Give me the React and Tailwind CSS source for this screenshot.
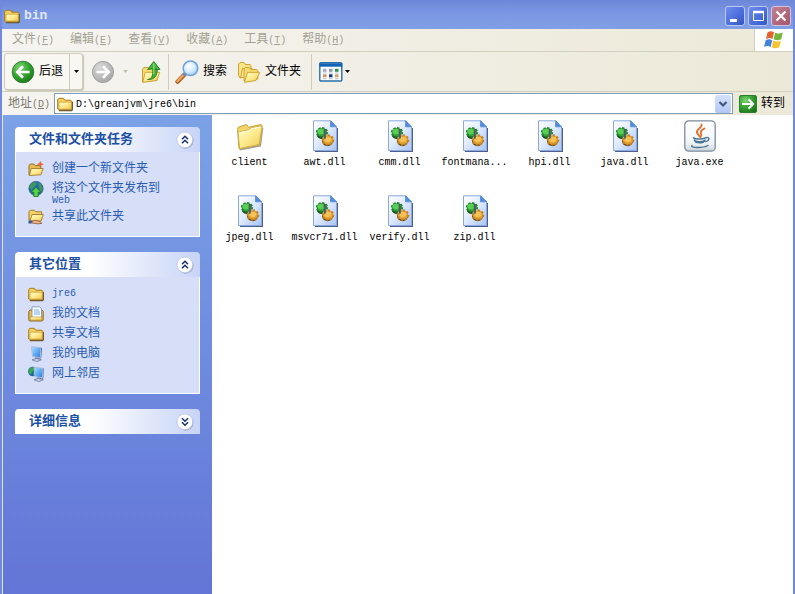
import React, { useState } from 'react';

const menus = [
  { label: '文件', hotkey: 'F' },
  { label: '编辑', hotkey: 'E' },
  { label: '查看', hotkey: 'V' },
  { label: '收藏', hotkey: 'A' },
  { label: '工具', hotkey: 'T' },
  { label: '帮助', hotkey: 'H' },
];

const files = [
  { name: 'client', type: 'folder' },
  { name: 'awt.dll', type: 'dll' },
  { name: 'cmm.dll', type: 'dll' },
  { name: 'fontmana...', type: 'dll' },
  { name: 'hpi.dll', type: 'dll' },
  { name: 'java.dll', type: 'dll' },
  { name: 'java.exe', type: 'java' },
  { name: 'jpeg.dll', type: 'dll' },
  { name: 'msvcr71.dll', type: 'dll' },
  { name: 'verify.dll', type: 'dll' },
  { name: 'zip.dll', type: 'dll' },
];

// Gradients shared by all the icons
function IconDefs() {
  return (
    <svg width="0" height="0" className="absolute" aria-hidden="true">
      <defs>
        <linearGradient id="folderFront" x1="0" y1="0" x2="1" y2="1">
          <stop offset="0" stopColor="#fffbd0" />
          <stop offset="0.5" stopColor="#fdeb8f" />
          <stop offset="1" stopColor="#f0c64c" />
        </linearGradient>
        <linearGradient id="page" x1="0" y1="0" x2="1" y2="1">
          <stop offset="0" stopColor="#ffffff" />
          <stop offset="0.45" stopColor="#e2ecfd" />
          <stop offset="1" stopColor="#a9c4f6" />
        </linearGradient>
        <radialGradient id="greenBall" cx="0.35" cy="0.3" r="0.8">
          <stop offset="0" stopColor="#7ed672" />
          <stop offset="0.5" stopColor="#37a532" />
          <stop offset="1" stopColor="#177318" />
        </radialGradient>
        <radialGradient id="grayBall" cx="0.35" cy="0.3" r="0.8">
          <stop offset="0" stopColor="#dadada" />
          <stop offset="1" stopColor="#a3a3a3" />
        </radialGradient>
        <radialGradient id="lens" cx="0.4" cy="0.35" r="0.7">
          <stop offset="0" stopColor="#ffffff" />
          <stop offset="0.6" stopColor="#cfeafd" />
          <stop offset="1" stopColor="#8cc4f2" />
        </radialGradient>
        <linearGradient id="screen" x1="0" y1="0" x2="1" y2="1">
          <stop offset="0" stopColor="#a4e4ff" />
          <stop offset="1" stopColor="#2378e6" />
        </linearGradient>
        <linearGradient id="javaBox" x1="0" y1="0" x2="0" y2="1">
          <stop offset="0" stopColor="#ffffff" />
          <stop offset="0.7" stopColor="#f3f6f8" />
          <stop offset="1" stopColor="#ccd6de" />
        </linearGradient>
      </defs>
    </svg>
  );
}

function FolderSmall() {
  return (
    <svg viewBox="0 0 16 16" className="w-4 h-4 shrink-0" aria-hidden="true">
      <path d="M2 14.5h12.5l1-1V6" fill="none" stroke="#5f5137" strokeWidth="1.4" />
      <path d="M.7 13V3.6L2 2.3h4.3l1.4 1.9h6.1l1 1V13l-.8.8H1.5z" fill="#f3cf5c" stroke="#a8791c" strokeWidth="1" />
      <path d="M2 6.300h12.200v6.800H2z" fill="url(#folderFront)" stroke="#c99a2e" strokeWidth=".6" />
    </svg>
  );
}

function FolderLarge() {
  return (
    <svg viewBox="0 0 32 32" className="w-8 h-8" aria-hidden="true">
      <path d="M5 28.5 24 25l4.5-18 .8 1L27 26.500 6 30.500z" fill="#8c8468" opacity=".75" />
      <path d="M3.500 9.500 4.500 7l8-2.500 2 2.800L27 4.500l1 1.500-2.500 18L5 28.500z" fill="#f4d469" stroke="#c6a23b" strokeWidth="1" />
      <path d="M4 12 15 9.800l1.600-2L28 6l-2.600 18.500L5.600 28.600z" fill="url(#folderFront)" stroke="#d2ac3f" strokeWidth=".9" />
      <path d="M5.200 12.800 15.600 10.700l1.600-2L26.700 7" fill="none" stroke="#fffef0" strokeWidth="1" />
    </svg>
  );
}

function DllIcon() {
  return (
    <svg viewBox="0 0 32 32" className="w-8 h-8" aria-hidden="true">
      <path d="M6 31.300h22.300V8" fill="none" stroke="#4d5f91" strokeWidth="1.400" />
      <path d="M4.500.800h17.300l5.700 6v23.700h-23z" fill="url(#page)" stroke="#8ba9dc" />
      <path d="M21.500.800v6h6z" fill="#4c8de4" stroke="#5a8ad2" strokeWidth=".8" />
      {/* green gear, tipped back */}
      <path d="M7.500 14.500c.5 3 3 4.800 6 4.500l1-4z" fill="#17531b" />
      <ellipse cx="13" cy="12.300" rx="5.300" ry="4.300" fill="#36a838" stroke="#24862a" strokeWidth="1.800" strokeDasharray="2.200 1.500" />
      <ellipse cx="12.300" cy="11.500" rx="3.800" ry="2.800" fill="#56cf52" />
      {/* orange gear in front */}
      <ellipse cx="18.500" cy="21.300" rx="5.400" ry="4.900" fill="#6b4a13" />
      <ellipse cx="19" cy="20" rx="5.300" ry="4.700" fill="#e0a030" stroke="#c58322" strokeWidth="2" strokeDasharray="2.200 1.600" />
      <ellipse cx="18.800" cy="19.500" rx="3.600" ry="2.800" fill="#f5c055" />
      <path d="M14.700 8.500v8.500l1 2.500 1.100-1.500V9.200z" fill="#4d5a63" />
    </svg>
  );
}

function JavaIcon() {
  return (
    <svg viewBox="0 0 32 32" className="w-8 h-8" fill="none" aria-hidden="true">
      <rect x=".8" y=".8" width="30.400" height="30.400" rx="4" fill="url(#javaBox)" stroke="#7c8c9a" strokeWidth="1.300" />
      <path d="M17.500 4.500c1.500 3-5.500 4.500-4.500 8 .4 1.600 2 2.500 2.500 4M20.500 8.500c-3 1.500-4.500 3-3.500 5 .8 1.400.6 2.300-.5 3.500" stroke="#e3712e" strokeWidth="1.900" strokeLinecap="round" />
      <path d="M9.500 17.800c2 1.600 9.500 1.500 12 0M10.500 20c.5 3.800 9.500 3.800 10.500 0M10.500 20.800c3 1 7.500 1 10 0" stroke="#4a7596" strokeWidth="1.500" strokeLinecap="round" />
      <path d="M21.800 17.800c4-1.500 4.500 3-.5 4" stroke="#4a7596" strokeWidth="1.400" />
      <path d="M8 25.500c-3 2.300 11 3 16 0" stroke="#4a7596" strokeWidth="1.400" strokeLinecap="round" />
    </svg>
  );
}

function BackIcon() {
  return (
    <svg viewBox="0 0 24 24" className="w-6 h-6 shrink-0" fill="none" aria-hidden="true">
      <circle cx="12" cy="12" r="10.800" fill="url(#greenBall)" stroke="#2a7f2c" strokeWidth=".9" />
      <path d="M18.500 12H7M12 6.300 6.300 12l5.700 5.700" stroke="#fff" strokeWidth="2.700" />
    </svg>
  );
}

function ForwardIcon() {
  return (
    <svg viewBox="0 0 24 24" className="w-6 h-6 shrink-0" fill="none" aria-hidden="true">
      <circle cx="12" cy="12" r="10.600" fill="url(#grayBall)" stroke="#9c9c9c" strokeWidth=".9" />
      <path d="M5.500 12H17M12 6.300l5.700 5.700-5.700 5.700" stroke="#fff" strokeWidth="2.700" />
    </svg>
  );
}

function UpIcon() {
  return (
    <svg viewBox="0 0 20 24" className="w-5 h-6 shrink-0" aria-hidden="true">
      <path d="M1.500 22V9l1.300-1.500h4l1.500 1.800h7.200l1 1.200V20z" fill="#f6dc72" stroke="#c9a132" />
      <path d="m1.800 22.300 2.400-10h14.500l-2.800 8.200z" fill="url(#folderFront)" stroke="#cfa638" />
      <path d="M6.500 19.500c4.500-.5 5.500-4 5.200-10H16C16.300 16 13.500 20 6.500 19.500z" fill="#3fae37" stroke="#1d7c20" strokeWidth=".8" />
      <path d="M6.500 9.500 12.800 1.500 19 9.500h-3.300L12 8.500z" fill="#45b53d" stroke="#1d7c20" strokeWidth=".9" />
      <path d="M12.800 3.200v11" stroke="#83dc70" strokeWidth="1.300" />
    </svg>
  );
}

function SearchIcon() {
  return (
    <svg viewBox="0 0 24 24" className="w-6 h-6 shrink-0" aria-hidden="true">
      <path d="m2.500 21.700 7-7.200" stroke="#a35a20" strokeWidth="4.200" strokeLinecap="round" />
      <path d="m2.400 21.300 6-6.200" stroke="#f0a05a" strokeWidth="2.400" strokeLinecap="round" />
      <path d="m8.500 15.600 2-2" stroke="#7087ae" strokeWidth="3.500" />
      <circle cx="15.500" cy="8.300" r="7.300" fill="url(#lens)" stroke="#6d9fdc" strokeWidth="1.500" />
    </svg>
  );
}

function FoldersIcon() {
  return (
    <svg viewBox="0 0 24 24" className="w-6 h-6 shrink-0" stroke="#cda22e" aria-hidden="true">
      <path d="M1.500 15V4L3 2.500h4l1.500 2H13l1 1.300V14l-11 4z" fill="#f9e384" />
      <path d="m3.500 18 2-9.500h9.500L13 16z" fill="url(#folderFront)" />
      <path d="M7 21V9l1.300-1.500h4l1.500 2h6l1 1V19z" fill="#f6dc72" />
      <path d="m7.500 22.300 3-10h12.300l-4 8.200z" fill="url(#folderFront)" />
    </svg>
  );
}

function ViewsIcon() {
  return (
    <svg viewBox="0 0 24 20" className="w-6 h-5 shrink-0" aria-hidden="true">
      <rect x=".8" y=".8" width="22" height="18.200" rx="1" fill="#f9fcff" stroke="#276fa8" strokeWidth="1.400" />
      <path d="M.5 1.300h22.800v3.400H.5z" fill="#1262b5" />
      <path d="M4 6.800h3.500v3H4z" fill="#a5a8d0" />
      <path d="M10 6.800h3.500v3H10z" fill="#9299b2" />
      <path d="M16 6.800h3.500v3H16z" fill="#2f9445" />
      <path d="M4 12.300h3.500v3H4z" fill="#e39254" />
      <path d="M10 12.300h3.500v3H10z" fill="#15397e" />
      <path d="M16 12.300h3.500v3H16z" fill="#d89f63" />
      <path d="M4 11h3.500M10 11h3.500M16 11h3.500M4 16.700h3.500M10 16.700h3.500M16 16.700h3.500" stroke="#a4a9b8" strokeWidth=".7" />
    </svg>
  );
}

function WindowsFlag() {
  return (
    <svg viewBox="0 0 22 20" className="w-[22px] h-5" aria-hidden="true">
      <path d="M4.500 2.500C7 .8 9 1 11 2.200L9.500 9C7.500 7.800 5.500 7.800 3 9.200z" fill="#e4622f" />
      <path d="M12 2.700c2.500 1.200 5 1 7.800-.3l-1.600 6.800c-2.800 1.400-5 1.200-7.500 0z" fill="#74b53c" />
      <path d="M2.700 10.300C5 8.800 7.300 9 9.200 10.200L7.700 17C5.500 15.600 3.500 15.600 1 17z" fill="#4382da" />
      <path d="M10.300 10.600c2.500 1.300 4.800 1.300 7.600.1l-1.700 6.600c-2.700 1.400-5 1.300-7.400 0z" fill="#f5c431" />
    </svg>
  );
}

function NewFolderIcon() {
  return (
    <svg viewBox="0 0 16 16" className="w-4 h-4 shrink-0" aria-hidden="true">
      <path d="M1 14V4.500L2.300 3h3.500l1.500 1.700h5.500V13z" fill="#e9bd4d" stroke="#94702b" />
      <path d="m1.500 14.500 1.700-7h12l-2.300 6.300z" fill="url(#folderFront)" stroke="#a57e2f" strokeWidth=".9" />
      <path d="m12.300 0 1.100 2.200 2.500 1-2.500 1.100-1.100 2.400-1.100-2.400-2.300-1.100 2.300-1z" fill="#ef6232" />
    </svg>
  );
}

function PublishIcon() {
  return (
    <svg viewBox="0 0 16 16" className="w-4 h-4 shrink-0" aria-hidden="true">
      <circle cx="8" cy="7.500" r="7.200" fill="#2369b7" stroke="#355a77" strokeWidth=".6" />
      <path d="M1.300 6c1-3 3-4.800 6-5l1.500 2-3 3L3.500 9zM10 1.500l3 1.500 2 5-2.500 3z" fill="#3f9a55" />
      <path d="m8 6.300 5 5h-2.800v4.200H5.800v-4.200H3z" fill="#58d247" stroke="#197521" strokeWidth=".8" />
    </svg>
  );
}

function ShareIcon() {
  return (
    <svg viewBox="0 0 16 16" className="w-4 h-4 shrink-0" aria-hidden="true">
      <path d="M1 11V2.500L2.300 1.300h4l1.300 1.500h6V11z" fill="#f4d467" stroke="#a37b2a" />
      <path d="m2 12 2-6.500h11.300L13 12z" fill="url(#folderFront)" stroke="#a37b2a" strokeWidth=".9" />
      <path d="M.500 11.500h3.300v3H.500z" fill="#38559d" />
      <path d="m4 12 3-.8 5 1.300 2 1.800-4 .6L4 14z" fill="#efb482" stroke="#7c4b2b" strokeWidth=".7" />
    </svg>
  );
}

function DocumentsIcon() {
  return (
    <svg viewBox="0 0 16 16" className="w-4 h-4 shrink-0" aria-hidden="true">
      <path d="M.8 14V5.500L2 4h12l1.200 1.500V14l-1 1H1.500z" fill="#e9bc4d" stroke="#8b682a" />
      <path d="M4 .8h7.500l2 2v9H4z" fill="#f6fbff" stroke="#6f91b5" strokeWidth=".8" />
      <path d="M6 4h5M6 6h6M6 8h6" stroke="#6fa5d5" strokeWidth=".9" />
      <path d="M2.300 11h11.400v3H2.300z" fill="url(#folderFront)" stroke="#b88b30" strokeWidth=".6" />
    </svg>
  );
}

function ComputerIcon() {
  return (
    <svg viewBox="0 0 16 16" className="w-4 h-4 shrink-0" aria-hidden="true">
      <path d="m12.500 1.500 1.500.5-.8 10-2 1z" fill="#3f5788" />
      <path d="m3.500.800 9.300.700-.500 10.200-7.800-1.200z" fill="url(#screen)" stroke="#a9bddd" />
      <path d="m7 11.500 4 .5v2H7z" fill="#65789f" />
      <path d="m4 13.800 4.500-1.500 4.800 1.500-4.500 1.900z" fill="#c6cde0" stroke="#5f7099" strokeWidth=".7" />
    </svg>
  );
}

function NetworkIcon() {
  return (
    <svg viewBox="0 0 16 16" className="w-4 h-4 shrink-0" aria-hidden="true">
      <circle cx="4.900" cy="5.500" r="4.800" fill="#1f5fb5" />
      <path d="M.5 4.500C1.500 2 3.500.7 5.500.9L6 4 3.500 7.500 2 9zM5 6.500 8 5v4l-2 1.200z" fill="#3aaa48" />
      <path d="m14.500 2 1.300.5-.5 9.700-1.800 1z" fill="#3f5788" />
      <path d="m6 1.500 9 .700-.500 9.600-7.500-1.200z" fill="url(#screen)" stroke="#a9bddd" />
      <path d="M9 11.500l4 .5v2H9z" fill="#65789f" />
      <path d="m6 13.800 4.500-1.500 4.800 1.500-4.500 1.900z" fill="#c6cde0" stroke="#5f7099" strokeWidth=".7" />
    </svg>
  );
}

function Triangle() {
  return (
    <svg viewBox="0 0 5 3" className="w-[5px] h-[3px] shrink-0" fill="currentColor" aria-hidden="true">
      <path d="M0 0h5L2.500 3z" />
    </svg>
  );
}

const fileIcons = { folder: FolderLarge, dll: DllIcon, java: JavaIcon };

const tasks = [
  { label: '创建一个新文件夹', icon: NewFolderIcon },
  { label: '将这个文件夹发布到', latin: 'Web', icon: PublishIcon },
  { label: '共享此文件夹', icon: ShareIcon },
];

const places = [
  { latin: 'jre6', icon: FolderSmall },
  { label: '我的文档', icon: DocumentsIcon },
  { label: '共享文档', icon: FolderSmall },
  { label: '我的电脑', icon: ComputerIcon },
  { label: '网上邻居', icon: NetworkIcon },
];

function Panel({ title, items, defaultOpen }) {
  const [open, setOpen] = useState(defaultOpen);

  return (
    <section>
      <button
        type="button"
        onClick={() => setOpen(!open)}
        aria-expanded={open}
        className="w-full h-[25px] pl-3.5 pr-1.5 flex items-center justify-between rounded-t bg-linear-to-r from-white from-40% to-[#c8d4f7]"
      >
        <span className="text-[13px] font-bold text-[#1c50a5]">{title}</span>
        <svg viewBox="0 0 18 18" className="w-[18px] h-[18px]" fill="none" aria-hidden="true">
          <circle cx="9.500" cy="9.700" r="8" fill="#9ca8ca" />
          <circle cx="8.800" cy="8.800" r="7.900" fill="#fff" stroke="#b9c3df" strokeWidth=".8" />
          <path
            d={open ? 'm6 8.300 3-3 3 3M6 12.300l3-3 3 3' : 'm6 5.300 3 3 3-3M6 9.300l3 3 3-3'}
            stroke="#16306f"
            strokeWidth="1.500"
          />
        </svg>
      </button>
      {open && items && (
        <ul className="px-3 pt-[5px] pb-[11px] border border-t-0 border-white bg-[#d6dff7]">
          {items.map(({ label, latin, icon: Icon }) => (
            <li key={label || latin}>
              <a href="#" className="flex items-start gap-2 pt-1 text-[#2a5cb0]">
                <Icon />
                <span>
                  {label && <span className="block leading-4">{label}</span>}
                  {latin && <span className={label ? 'block text-[10px] leading-2' : 'block text-[10px] leading-4'}>{latin}</span>}
                </span>
              </a>
            </li>
          ))}
        </ul>
      )}
    </section>
  );
}

export default function App() {
  const [address, setAddress] = useState('D:\\greanjvm\\jre6\\bin');

  return (
    <div className="min-h-screen flex flex-col border-x-2 border-[#7389de] bg-white text-xs text-black font-['Liberation_Mono','Noto_Sans_CJK_SC',monospace]">
      <IconDefs />

      {/* Title bar */}
      <header className="h-[29px] pt-0.5 pl-0.5 pr-0.5 flex items-center gap-1 bg-linear-to-b from-[#6c87d8] via-[#7c98e4] to-[#809fe5]">
        <FolderSmall />
        <h1 className="flex-1 text-[13px] font-bold text-[#e2e9fb]">bin</h1>
        <div className="flex gap-[3px]">
          <button type="button" aria-label="Minimize" className="w-5 h-5 rounded-[3px] border border-[#b9c8f3] bg-linear-to-br from-[#6e8df0] to-[#3356c8]">
            <svg viewBox="0 0 18 18" aria-hidden="true">
              <path d="M4 12h7v3H4z" fill="#fff" />
            </svg>
          </button>
          <button type="button" aria-label="Maximize" className="w-5 h-5 rounded-[3px] border border-[#b9c8f3] bg-linear-to-br from-[#6e8df0] to-[#3356c8]">
            <svg viewBox="0 0 18 18" fill="none" stroke="#fff" aria-hidden="true">
              <path d="M4.500 4.500h10v9h-10z" />
              <path d="M4 5h11" strokeWidth="2.500" />
            </svg>
          </button>
          <button type="button" aria-label="Close" className="w-5 h-5 rounded-[3px] border border-[#d5c3dc] bg-linear-to-br from-[#c08292] to-[#a4566c]">
            <svg viewBox="0 0 18 18" fill="none" stroke="#fff" strokeWidth="2.200" aria-hidden="true">
              <path d="m4.500 4.500 9 9M13.500 4.500l-9 9" />
            </svg>
          </button>
        </div>
      </header>

      {/* Menu bar */}
      <div className="h-[23px] flex items-stretch border-b border-[#d2cfbf] bg-linear-to-r from-[#f5f4f0] to-[#ece9d8]">
        <nav className="flex-1 pl-2.5 flex items-center gap-4 text-[#a3a195]">
          {menus.map((menu) => (
            <button key={menu.hotkey} type="button" className="whitespace-nowrap">
              {menu.label}
              <span className="text-[10px]">(<u>{menu.hotkey}</u>)</span>
            </button>
          ))}
        </nav>
        <div className="w-[39px] flex items-center justify-center border-l border-[#d2cfbf] bg-white">
          <WindowsFlag />
        </div>
      </div>

      {/* Toolbar */}
      <div className="h-10 pl-0.5 flex items-center border-b border-[#d2cfbf] bg-linear-to-r from-[#f5f4f0] to-[#ece9d8]">
        <div className="h-[37px] flex rounded-[3px] border border-[#cfccbd] bg-[#f8f7f2] shadow-[1px_1px_1px_#c9c5b5]">
          <button type="button" className="pl-1.5 pr-1.5 flex items-center gap-1 border-r border-[#cfccbd]">
            <BackIcon />
            后退
          </button>
          <button type="button" aria-label="Back history" className="w-3 flex items-center justify-center">
            <Triangle />
          </button>
        </div>
        <button type="button" aria-label="Forward" className="ml-2">
          <ForwardIcon />
        </button>
        <button type="button" aria-label="Forward history" className="w-5 flex items-center justify-center text-[#bfbdb2]">
          <Triangle />
        </button>
        <button type="button" aria-label="Up" className="ml-1.5 mr-[7px]">
          <UpIcon />
        </button>
        <div className="w-px h-9 bg-[#d0cdbe]" />
        <button type="button" className="ml-1.5 flex items-center gap-1">
          <SearchIcon />
          搜索
        </button>
        <button type="button" className="mx-2.5 flex items-center gap-1">
          <FoldersIcon />
          文件夹
        </button>
        <div className="w-px h-9 bg-[#d0cdbe]" />
        <button type="button" aria-label="Views" className="ml-[7px] flex items-center gap-0.5">
          <ViewsIcon />
          <Triangle />
        </button>
      </div>

      {/* Address bar */}
      <form
        onSubmit={(e) => e.preventDefault()}
        className="h-[23px] pl-1.5 pr-2 flex items-center bg-linear-to-r from-[#f5f4f0] to-[#ece9d8]"
      >
        <label htmlFor="address" className="w-[46px] shrink-0 whitespace-nowrap text-[#7d7b72]">
          地址<span className="text-[10px]">(<u>D</u>)</span>
        </label>
        <div className="flex-1 min-w-0 h-[21px] pl-0.5 pr-px flex items-center gap-[3px] border border-[#7f9db9] bg-white">
          <FolderSmall />
          <input
            id="address"
            type="text"
            value={address}
            onChange={(e) => setAddress(e.target.value)}
            className="flex-1 min-w-0 pt-0.5 text-[10px] outline-none"
          />
          <button type="button" aria-label="Address history" className="w-4 h-[18px] rounded-xs bg-linear-to-b from-[#d5e0fd] to-[#b4c8f6]">
            <svg viewBox="0 0 16 18" fill="none" stroke="#3f5785" strokeWidth="2.200" aria-hidden="true">
              <path d="m4.500 7 3.500 3.500L11.500 7" />
            </svg>
          </button>
        </div>
        <button type="submit" className="ml-1.5 flex items-center gap-1 whitespace-nowrap">
          <svg viewBox="0 0 18 18" className="w-[18px] h-[18px]" fill="none" aria-hidden="true">
            <rect x=".5" y=".5" width="17" height="17" rx="1.500" fill="url(#greenBall)" stroke="#2f7d35" />
            <path d="M3 9h11M9.500 4.300 14.200 9l-4.700 4.700" stroke="#fff" strokeWidth="2" />
          </svg>
          转到
        </button>
      </form>

      <div className="flex-1 flex">
        {/* Task pane */}
        <aside className="w-[210px] shrink-0 px-3 pt-3 flex flex-col gap-[15px] border-l border-[#dfe6fa] bg-linear-to-b from-[#7ba2e7] to-[#6375d6]">
          <Panel title="文件和文件夹任务" items={tasks} defaultOpen />
          <Panel title="其它位置" items={places} defaultOpen />
          <Panel title="详细信息" defaultOpen={false} />
        </aside>

        {/* File list */}
        <main className="flex-1 pt-[5px]">
          <ul className="grid grid-cols-[repeat(auto-fill,75px)]">
            {files.map((file) => {
              const Icon = fileIcons[file.type];
              return (
                <li key={file.name} className="h-[75px]">
                  <button type="button" className="w-full flex flex-col items-center gap-[3px]">
                    <Icon />
                    <span className="text-[10px] leading-4 whitespace-nowrap">{file.name}</span>
                  </button>
                </li>
              );
            })}
          </ul>
        </main>
      </div>
    </div>
  );
}
